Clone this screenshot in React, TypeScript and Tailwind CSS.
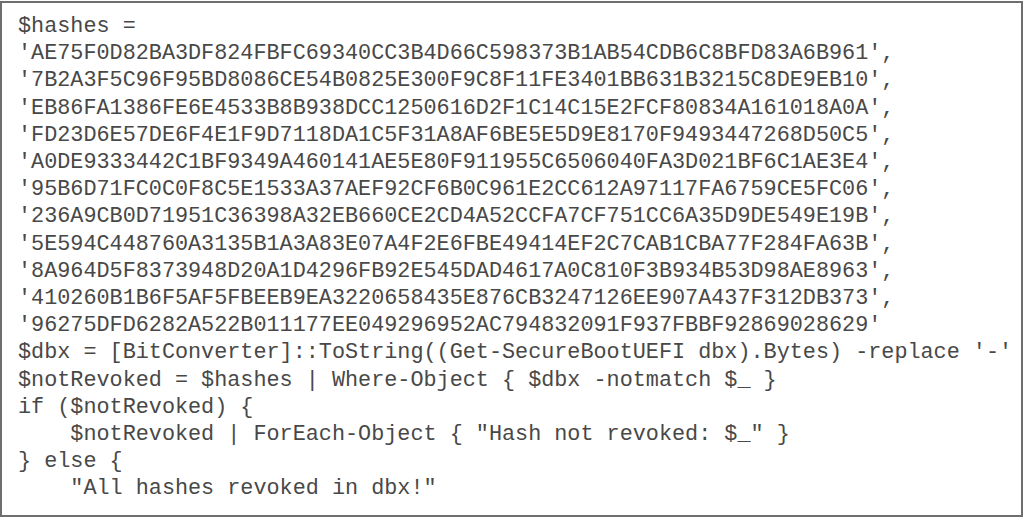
const lines = [
  "$hashes =",
  "'AE75F0D82BA3DF824FBFC69340CC3B4D66C598373B1AB54CDB6C8BFD83A6B961',",
  "'7B2A3F5C96F95BD8086CE54B0825E300F9C8F11FE3401BB631B3215C8DE9EB10',",
  "'EB86FA1386FE6E4533B8B938DCC1250616D2F1C14C15E2FCF80834A161018A0A',",
  "'FD23D6E57DE6F4E1F9D7118DA1C5F31A8AF6BE5E5D9E8170F9493447268D50C5',",
  "'A0DE9333442C1BF9349A460141AE5E80F911955C6506040FA3D021BF6C1AE3E4',",
  "'95B6D71FC0C0F8C5E1533A37AEF92CF6B0C961E2CC612A97117FA6759CE5FC06',",
  "'236A9CB0D71951C36398A32EB660CE2CD4A52CCFA7CF751CC6A35D9DE549E19B',",
  "'5E594C448760A3135B1A3A83E07A4F2E6FBE49414EF2C7CAB1CBA77F284FA63B',",
  "'8A964D5F8373948D20A1D4296FB92E545DAD4617A0C810F3B934B53D98AE8963',",
  "'410260B1B6F5AF5FBEEB9EA3220658435E876CB3247126EE907A437F312DB373',",
  "'96275DFD6282A522B011177EE049296952AC794832091F937FBBF92869028629'",
  "$dbx = [BitConverter]::ToString((Get-SecureBootUEFI dbx).Bytes) -replace '-'",
  "$notRevoked = $hashes | Where-Object { $dbx -notmatch $_ }",
  "if ($notRevoked) {",
  "    $notRevoked | ForEach-Object { \"Hash not revoked: $_\" }",
  "} else {",
  "    \"All hashes revoked in dbx!\"",
];

export default function App() {
  return (
    <div className="w-[1024px] h-[518px] bg-white pt-px">
      <div className="w-[1023px] h-[516px] border-2 border-[#6e6e6e] bg-white pl-[16px] pt-[10px]">
        <pre className="font-['Liberation_Mono',monospace] text-[21.8px] leading-[27.2px] text-[#484848] whitespace-pre m-0">
          {lines.join("\n")}
        </pre>
      </div>
    </div>
  );
}
